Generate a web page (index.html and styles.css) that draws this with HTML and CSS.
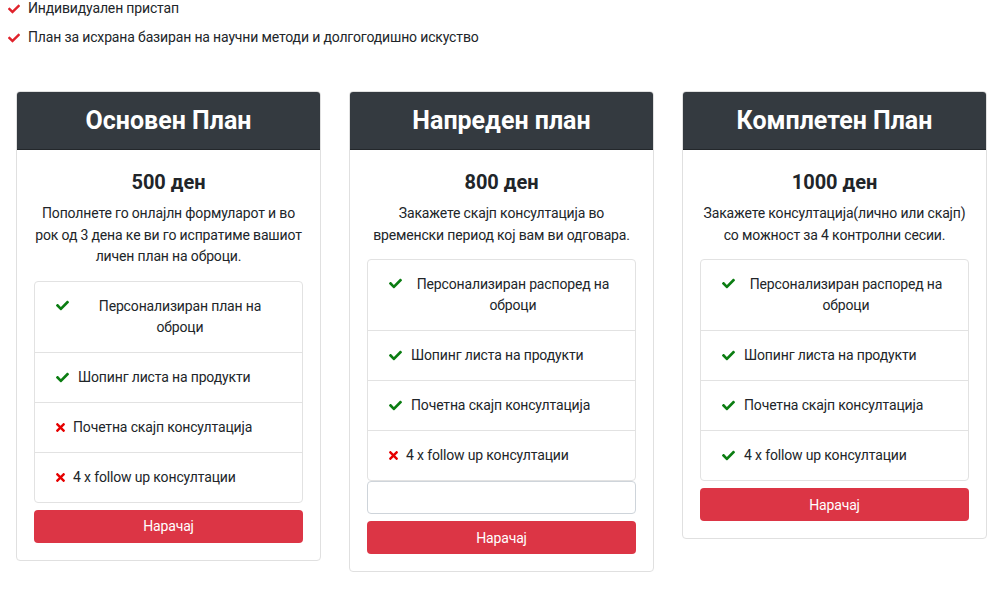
FILE: index.html
```html
<!DOCTYPE html>
<html lang="mk">
<head>
<meta charset="utf-8">
<title>Планови</title>
<link rel="stylesheet" href="styles.css">
</head>
<body>
<ul class="perks">
  <li><svg class="ico ico-perk" viewBox="0 0 512 512"><path d="M173.9 439.4l-166.4-166.4c-10-10-10-26.2 0-36.2l36.2-36.2c10-10 26.2-10 36.2 0L192 312.7 432.1 72.6c10-10 26.2-10 36.2 0l36.2 36.2c10 10 10 26.2 0 36.2l-294.4 294.4c-10 10-26.2 10-36.2 0z"/></svg>Индивидуален пристап</li>
  <li><svg class="ico ico-perk" viewBox="0 0 512 512"><path d="M173.9 439.4l-166.4-166.4c-10-10-10-26.2 0-36.2l36.2-36.2c10-10 26.2-10 36.2 0L192 312.7 432.1 72.6c10-10 26.2-10 36.2 0l36.2 36.2c10 10 10 26.2 0 36.2l-294.4 294.4c-10 10-26.2 10-36.2 0z"/></svg>План за исхрана базиран на научни методи и долгогодишно искуство</li>
</ul>

<div class="plans">
  <div class="card">
    <div class="card-header">Основен План</div>
    <div class="card-body">
      <h4 class="price">500 ден</h4>
      <p class="desc">Пополнете го онлајлн формуларот и во рок од 3 дена ке ви го испратиме вашиот личен план на оброци.</p>
      <ul class="list">
        <li class="item item-wide"><svg class="ico ico-yes" viewBox="0 0 512 512"><path d="M173.9 439.4l-166.4-166.4c-10-10-10-26.2 0-36.2l36.2-36.2c10-10 26.2-10 36.2 0L192 312.7 432.1 72.6c10-10 26.2-10 36.2 0l36.2 36.2c10 10 10 26.2 0 36.2l-294.4 294.4c-10 10-26.2 10-36.2 0z"/></svg><span class="item-text">Персонализиран план на оброци</span></li>
        <li class="item"><svg class="ico ico-yes" viewBox="0 0 512 512"><path d="M173.9 439.4l-166.4-166.4c-10-10-10-26.2 0-36.2l36.2-36.2c10-10 26.2-10 36.2 0L192 312.7 432.1 72.6c10-10 26.2-10 36.2 0l36.2 36.2c10 10 10 26.2 0 36.2l-294.4 294.4c-10 10-26.2 10-36.2 0z"/></svg>Шопинг листа на продукти</li>
        <li class="item"><svg class="ico ico-no" viewBox="0 0 352 512"><path d="M242.7 256l100.1-100.1c12.3-12.3 12.3-32.2 0-44.5l-22.2-22.2c-12.3-12.3-32.2-12.3-44.5 0L176 189.3 75.9 89.2c-12.3-12.3-32.2-12.3-44.5 0L9.2 111.5c-12.3 12.3-12.3 32.2 0 44.5L109.3 256 9.2 356.1c-12.3 12.3-12.3 32.2 0 44.5l22.2 22.2c12.3 12.3 32.2 12.3 44.5 0L176 322.7l100.1 100.1c12.3 12.3 32.2 12.3 44.5 0l22.2-22.2c12.3-12.3 12.3-32.2 0-44.5L242.7 256z"/></svg>Почетна скајп консултација</li>
        <li class="item"><svg class="ico ico-no" viewBox="0 0 352 512"><path d="M242.7 256l100.1-100.1c12.3-12.3 12.3-32.2 0-44.5l-22.2-22.2c-12.3-12.3-32.2-12.3-44.5 0L176 189.3 75.9 89.2c-12.3-12.3-32.2-12.3-44.5 0L9.2 111.5c-12.3 12.3-12.3 32.2 0 44.5L109.3 256 9.2 356.1c-12.3 12.3-12.3 32.2 0 44.5l22.2 22.2c12.3 12.3 32.2 12.3 44.5 0L176 322.7l100.1 100.1c12.3 12.3 32.2 12.3 44.5 0l22.2-22.2c12.3-12.3 12.3-32.2 0-44.5L242.7 256z"/></svg>4 x follow up консултации</li>
      </ul>
      <button class="btn" type="button">Нарачај</button>
    </div>
  </div>

  <div class="card">
    <div class="card-header">Напреден план</div>
    <div class="card-body">
      <h4 class="price">800 ден</h4>
      <p class="desc">Закажете скајп консултација во временски период кој вам ви одговара.</p>
      <ul class="list">
        <li class="item item-wide"><svg class="ico ico-yes" viewBox="0 0 512 512"><path d="M173.9 439.4l-166.4-166.4c-10-10-10-26.2 0-36.2l36.2-36.2c10-10 26.2-10 36.2 0L192 312.7 432.1 72.6c10-10 26.2-10 36.2 0l36.2 36.2c10 10 10 26.2 0 36.2l-294.4 294.4c-10 10-26.2 10-36.2 0z"/></svg><span class="item-text">Персонализиран распоред на оброци</span></li>
        <li class="item"><svg class="ico ico-yes" viewBox="0 0 512 512"><path d="M173.9 439.4l-166.4-166.4c-10-10-10-26.2 0-36.2l36.2-36.2c10-10 26.2-10 36.2 0L192 312.7 432.1 72.6c10-10 26.2-10 36.2 0l36.2 36.2c10 10 10 26.2 0 36.2l-294.4 294.4c-10 10-26.2 10-36.2 0z"/></svg>Шопинг листа на продукти</li>
        <li class="item"><svg class="ico ico-yes" viewBox="0 0 512 512"><path d="M173.9 439.4l-166.4-166.4c-10-10-10-26.2 0-36.2l36.2-36.2c10-10 26.2-10 36.2 0L192 312.7 432.1 72.6c10-10 26.2-10 36.2 0l36.2 36.2c10 10 10 26.2 0 36.2l-294.4 294.4c-10 10-26.2 10-36.2 0z"/></svg>Почетна скајп консултација</li>
        <li class="item"><svg class="ico ico-no" viewBox="0 0 352 512"><path d="M242.7 256l100.1-100.1c12.3-12.3 12.3-32.2 0-44.5l-22.2-22.2c-12.3-12.3-32.2-12.3-44.5 0L176 189.3 75.9 89.2c-12.3-12.3-32.2-12.3-44.5 0L9.2 111.5c-12.3 12.3-12.3 32.2 0 44.5L109.3 256 9.2 356.1c-12.3 12.3-12.3 32.2 0 44.5l22.2 22.2c12.3 12.3 32.2 12.3 44.5 0L176 322.7l100.1 100.1c12.3 12.3 32.2 12.3 44.5 0l22.2-22.2c12.3-12.3 12.3-32.2 0-44.5L242.7 256z"/></svg>4 x follow up консултации</li>
      </ul>
      <input class="field" type="text" aria-label="Порака">
      <button class="btn" type="button">Нарачај</button>
    </div>
  </div>

  <div class="card">
    <div class="card-header">Комплетен План</div>
    <div class="card-body">
      <h4 class="price">1000 ден</h4>
      <p class="desc">Закажете консултација(лично или скајп) со можност за 4 контролни сесии.</p>
      <ul class="list">
        <li class="item item-wide"><svg class="ico ico-yes" viewBox="0 0 512 512"><path d="M173.9 439.4l-166.4-166.4c-10-10-10-26.2 0-36.2l36.2-36.2c10-10 26.2-10 36.2 0L192 312.7 432.1 72.6c10-10 26.2-10 36.2 0l36.2 36.2c10 10 10 26.2 0 36.2l-294.4 294.4c-10 10-26.2 10-36.2 0z"/></svg><span class="item-text">Персонализиран распоред на оброци</span></li>
        <li class="item"><svg class="ico ico-yes" viewBox="0 0 512 512"><path d="M173.9 439.4l-166.4-166.4c-10-10-10-26.2 0-36.2l36.2-36.2c10-10 26.2-10 36.2 0L192 312.7 432.1 72.6c10-10 26.2-10 36.2 0l36.2 36.2c10 10 10 26.2 0 36.2l-294.4 294.4c-10 10-26.2 10-36.2 0z"/></svg>Шопинг листа на продукти</li>
        <li class="item"><svg class="ico ico-yes" viewBox="0 0 512 512"><path d="M173.9 439.4l-166.4-166.4c-10-10-10-26.2 0-36.2l36.2-36.2c10-10 26.2-10 36.2 0L192 312.7 432.1 72.6c10-10 26.2-10 36.2 0l36.2 36.2c10 10 10 26.2 0 36.2l-294.4 294.4c-10 10-26.2 10-36.2 0z"/></svg>Почетна скајп консултација</li>
        <li class="item"><svg class="ico ico-yes" viewBox="0 0 512 512"><path d="M173.9 439.4l-166.4-166.4c-10-10-10-26.2 0-36.2l36.2-36.2c10-10 26.2-10 36.2 0L192 312.7 432.1 72.6c10-10 26.2-10 36.2 0l36.2 36.2c10 10 10 26.2 0 36.2l-294.4 294.4c-10 10-26.2 10-36.2 0z"/></svg>4 x follow up консултации</li>
      </ul>
      <button class="btn" type="button">Нарачај</button>
    </div>
  </div>
</div>
</body>
</html>
```

FILE: styles.css
```css
* { box-sizing: border-box; }

body {
  margin: 0;
  font-family: Roboto, "Noto Sans", sans-serif;
  font-size: 14px;
  letter-spacing: -0.15px;
  color: #212529;
  background: #fff;
}

.perks {
  list-style: none;
  margin: -6px 0 0;
  padding: 0 0 0 7px;
}

.perks li {
  display: flex;
  align-items: center;
  line-height: 29px;
}

.ico { flex: none; }

.ico-perk {
  width: 14px;
  height: 12px;
  fill: #e0222b;
  margin-right: 7px;
}

.plans {
  display: grid;
  grid-template-columns: repeat(3, 305px);
  column-gap: 28px;
  align-items: start;
  margin-top: 39px;
  padding-left: 16px;
}

.card {
  border: 1px solid #e0e0e0;
  border-radius: 4px;
  background: #fff;
}

.card-header {
  background: #343a40;
  color: #fff;
  border-radius: 3px 3px 0 0;
  border-bottom: 1px solid #23272b;
  height: 58px;
  display: flex;
  align-items: center;
  justify-content: center;
  font-size: 25px;
  font-weight: 700;
  letter-spacing: 0;
}

.card-body {
  padding: 17px 17px 17px;
  text-align: center;
  display: flex;
  flex-direction: column;
}

.price {
  margin: 0;
  font-size: 20px;
  font-weight: 700;
  line-height: 30px;
  letter-spacing: 0;
}

.desc {
  margin: 6px 0 13px;
  line-height: 21.5px;
}

.list {
  list-style: none;
  margin: 0;
  padding: 0;
  border: 1px solid #e2e2e2;
  border-radius: 4px;
  text-align: left;
}

.item {
  padding: 14px 20px;
  line-height: 21px;
  display: flex;
  align-items: center;
}

.item + .item { border-top: 1px solid #e2e2e2; }

.item-wide { align-items: flex-start; }

.item-text {
  flex: 1;
  text-align: center;
}

.ico-yes {
  width: 15px;
  height: 13px;
  fill: #0b7d12;
  margin-right: 8px;
}

.item-wide .ico-yes { margin-top: 3px; }

.ico-no {
  width: 11px;
  height: 13px;
  fill: #e60000;
  margin-right: 7px;
}

.field {
  height: 33px;
  margin-top: 0;
  border: 1px solid #ced4da;
  border-radius: 4px;
  background: #fff;
}

.btn {
  margin-top: 7px;
  height: 33px;
  border: none;
  border-radius: 4px;
  background: #dc3545;
  color: #fff;
  font-family: inherit;
  font-size: 14px;
  letter-spacing: -0.15px;
}
```
